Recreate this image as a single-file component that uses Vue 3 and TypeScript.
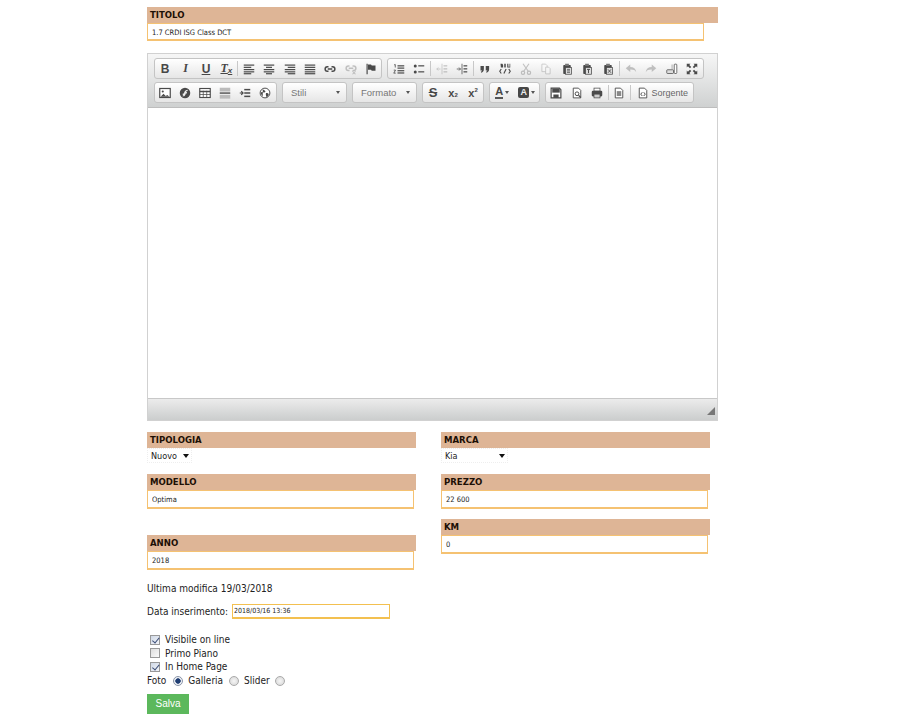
<script setup lang="ts">
type Tool = { svg?: string; text?: string; cls?: string; off?: boolean; sep?: boolean };
const d = '#4a4a4a';
const lines = (ys: [number, number, number][]) =>
  ys.map(([y, a, b]) => `<rect x="${a}" y="${y}" width="${b - a}" height="1.6" fill="${d}"/>`).join('');
const clip = (inner: string) =>
  `<rect x="3" y="2.5" width="10" height="12" rx="1" fill="${d}"/><rect x="5.5" y="1" width="5" height="3" fill="#777"/><rect x="6" y="6" width="8" height="9" fill="#ddd" stroke="${d}"/>${inner}`;
const I: Record<string, string> = {
  left: lines([[2, 1, 15], [5, 1, 11], [8, 1, 15], [11, 1, 15], [13.5, 1, 11]]),
  center: lines([[2, 1, 15], [5, 4, 12], [8, 1, 15], [11, 1, 15], [13.5, 4, 12]]),
  right: lines([[2, 1, 15], [5, 5, 15], [8, 1, 15], [11, 1, 15], [13.5, 5, 15]]),
  justify: lines([[2, 1, 15], [5, 1, 15], [8, 1, 15], [11, 1, 15], [13.5, 1, 15]]),
  link: `<path d="M6 5H4.5a3 3 0 0 0 0 6H6M10 5h1.5a3 3 0 0 1 0 6H10M5 8h6" fill="none" stroke="${d}" stroke-width="2"/>`,
  unlink: `<path d="M6 4H4.5a3 3 0 0 0 0 6H6M10 4h1.5a3 3 0 0 1 0 6H10M5 7h6" fill="none" stroke="${d}" stroke-width="2"/><path d="M10 11l4 4m0-4l-4 4" stroke="${d}" stroke-width="1.4"/>`,
  flag: `<path d="M2 1h1.6v14H2zM4 2h4l1 1.2h5v7H9l-1-1.2H4z" fill="${d}"/>`,
  ol: `<path d="M1.5 2.5L3 2v4M1 9.5h2.4L1 13.5h2.6" fill="none" stroke="${d}" stroke-width="1.1"/>` + lines([[3, 6, 15], [6, 6, 15], [9.5, 6, 15], [12.5, 6, 15]]),
  ul: `<circle cx="3" cy="4" r="2" fill="${d}"/><circle cx="3" cy="12" r="2" fill="${d}"/>` + lines([[3, 7, 15], [11, 7, 15]]),
  outdent: `<path d="M8 1v14" stroke="${d}"/><path d="M1 8h5M3 6l-2 2 2 2" fill="none" stroke="${d}"/>` + lines([[3, 10, 15], [7, 10, 15], [11, 10, 15]]),
  indent: `<path d="M8 1v14" stroke="${d}"/><path d="M1 8h5M4 6l2 2-2 2" fill="none" stroke="${d}"/>` + lines([[3, 10, 15], [7, 10, 15], [11, 10, 15]]),
  quote: `<path d="M2 4h4.5v4.4C6.5 11 5 12.5 3 13l-.6-1.2c1-.4 1.6-1 1.7-1.9H2zM9 4h4.5v4.4c0 2.6-1.5 4.1-3.5 4.6l-.6-1.2c1-.4 1.6-1 1.7-1.9H9z" fill="${d}"/>`,
  div: `<path d="M2 1h2.5l1 1.5V6h-3zM7 1h2v5H7zM11 1h1.5v4H14V1h1v5h-4z" fill="${d}"/><path d="M3 8l-2 3 2 3M13 8l2 3-2 3M9.5 8l-3 6" fill="none" stroke="${d}" stroke-width="1.5"/>`,
  cut: `<path d="M4 1l7 10M12 1L5 11" stroke="${d}" stroke-width="1.5"/><circle cx="4" cy="13" r="2.2" fill="none" stroke="${d}" stroke-width="1.5"/><circle cx="12" cy="13" r="2.2" fill="none" stroke="${d}" stroke-width="1.5"/>`,
  copy: `<path d="M2.5 1.5h5l2 2v8h-7z" fill="#fff" stroke="${d}"/><path d="M7.5 5.5h4l2 2v7h-6z" fill="#fff" stroke="${d}"/>`,
  paste: clip(`<path d="M8 8.5h4M8 10.5h4M8 12.5h4" stroke="${d}"/>`),
  pasteT: clip(`<path d="M8 8.5h4M10 8.5v5" stroke="${d}" stroke-width="1.3"/>`),
  pasteW: clip(`<path d="M8 8.5l4 4.5m0-4.5L8 13" stroke="${d}" stroke-width="1.2"/>`),
  undo: `<path d="M1 7l6-5v3.2c4.5 0 7.5 2.5 8 7-1.6-2.6-4-3.6-8-3.4V12z" fill="${d}"/>`,
  redo: `<path d="M15 7L9 2v3.2c-4.5 0-7.5 2.5-8 7 1.6-2.6 4-3.6 8-3.4V12z" fill="${d}"/>`,
  wiki: `<rect x="1" y="9" width="9" height="5" rx="1" fill="#ddd" stroke="${d}"/><rect x="11" y="1.5" width="3.4" height="12.5" rx="1" fill="#fff" stroke="${d}"/><rect x="7" y="2" width="3" height="6" fill="#ccc"/>`,
  max: `<path d="M1 1h5L4.4 2.6 7 5.2 5.2 7 2.6 4.4 1 6zM15 1v5l-1.6-1.6L10.8 7 9 5.2l2.6-2.6L10 1zM1 15v-5l1.6 1.6L5.2 9 7 10.8l-2.6 2.6L6 15zM15 15h-5l1.6-1.6L9 10.8 10.8 9l2.6 2.6L15 10z" fill="${d}"/>`,
  image: `<rect x="1" y="2" width="14" height="12" fill="#fff" stroke="${d}" stroke-width="1.6"/><path d="M2 13l4-4 3 3 2-1.5 3 2.5z" fill="${d}"/><circle cx="5" cy="6" r="1.4" fill="${d}"/>`,
  flash: `<circle cx="8" cy="8" r="7" fill="${d}"/><path d="M11.5 3.5C8 4 7 6 6.5 8.5H5v2h1c-.3 1-1 1.5-2 1.5 3 1 4.5-.5 5-3.5h1.5v-2H9.3c.3-.8 1-1.3 2.2-1.3z" fill="#eee"/>`,
  table: `<rect x="1" y="2" width="14" height="12" fill="#fff" stroke="${d}" stroke-width="1.5"/><path d="M1 6h14" stroke="${d}" stroke-width="2"/><path d="M1 10h14M5.7 5v9M10.3 5v9" stroke="${d}"/>`,
  hr: `<rect x="1" y="1" width="14" height="5" fill="#bbb"/><rect x="1" y="7.2" width="14" height="1.8" fill="${d}"/><rect x="1" y="10.5" width="14" height="5" fill="#bbb"/>`,
  block: `<path d="M1 8h4M3 5.5L5.5 8 3 10.5" fill="none" stroke="${d}" stroke-width="1.5"/><rect x="7" y="2.5" width="8" height="2" fill="${d}"/><rect x="7" y="7" width="8" height="2" fill="${d}"/><rect x="7" y="11.5" width="8" height="2" fill="${d}"/>`,
  globe: `<circle cx="8" cy="8" r="6.5" fill="#fff" stroke="${d}" stroke-width="1.3"/><path d="M5 2.5c1 1.5 3 1.5 3.5 3S6 7.5 5 7 2.5 7 2.5 8.5 4.5 11 5 12.5M9.5 8c1.5 0 3.5.5 3.5 2s-1.5 3-3 3.5c-.5-1.5-1.5-4.5-.5-5.5z" fill="${d}"/>`,
  save: `<path d="M1.5 1.5h11l2 2v11h-13z" fill="#fff" stroke="${d}" stroke-width="1.6"/><rect x="3" y="2" width="10" height="5.5" fill="${d}"/><rect x="4.5" y="10" width="7" height="4.5" fill="${d}"/>`,
  preview: `<path d="M3 1.5h7l3 3v10H3z" fill="#fff" stroke="${d}" stroke-width="1.2"/><circle cx="8" cy="9" r="2.5" fill="none" stroke="${d}" stroke-width="1.3"/><path d="M10 11l3 3" stroke="${d}" stroke-width="1.5"/>`,
  print: `<rect x="4" y="1.5" width="8" height="4" fill="#fff" stroke="${d}"/><rect x="1" y="5" width="14" height="7.5" rx="1.5" fill="${d}"/><rect x="4" y="9.5" width="8" height="5" fill="#ccc" stroke="${d}"/>`,
  page: `<path d="M3 1.5h7l3 3v10H3z" fill="#fff" stroke="${d}" stroke-width="1.2"/><rect x="5" y="5.5" width="6" height="6.5" fill="#888"/>`,
  source: `<path d="M3 1.5h7l3 3v10H3z" fill="#fff" stroke="${d}" stroke-width="1.2"/><path d="M7 7L5 9.5 7 12M9 7l2 2.5L9 12" fill="none" stroke="${d}" stroke-width="1.3"/>`,
};
const btn = (svg: string, off = false): Tool => ({ svg: I[svg], off });
const txt = (text: string, cls: string): Tool => ({ text, cls });
const sep: Tool = { sep: true };
const row1: Tool[][] = [
  [txt('B', 'b'), txt('I', 'i'), txt('U', 'u'), txt('T', 'tx'), sep, btn('left'), btn('center'), btn('right'), btn('justify'), btn('link'), btn('unlink', true), btn('flag')],
  [btn('ol'), btn('ul'), sep, btn('outdent', true), btn('indent'), sep, btn('quote'), btn('div'), btn('cut', true), btn('copy', true), btn('paste'), btn('pasteT'), btn('pasteW'), sep, btn('undo', true), btn('redo', true), btn('wiki'), btn('max')],
];
const group1: Tool[] = [btn('image'), btn('flash'), btn('table'), btn('hr'), btn('block'), btn('globe')];
const group3: Tool[] = [txt('S', 'strike'), txt('x', 'sub'), txt('x', 'sup')];
const group5: Tool[] = [btn('save'), btn('preview'), btn('print'), sep, btn('page'), sep];
const selects = [
  { label: 'TIPOLOGIA', value: 'Nuovo' },
  { label: 'MARCA', value: 'Kia' },
];
</script>

<template>
  <main class="page">
    <h2 class="head wide">TITOLO</h2>
    <input class="field title" value="1.7 CRDI ISG Class DCT" />

    <section class="editor">
      <div class="toolbar">
        <div class="tb-row">
          <div v-for="(g, gi) in row1" :key="gi" class="grp">
            <template v-for="(t, i) in g" :key="i">
              <span v-if="t.sep" class="sep"></span>
              <span v-else-if="t.text" class="tbtn" :class="t.cls">{{ t.text }}<small v-if="t.cls === 'tx'">x</small></span>
              <span v-else class="tbtn" :class="{ off: t.off }"><svg viewBox="0 0 16 16" width="12" height="12" v-html="t.svg"></svg></span>
            </template>
          </div>
        </div>
        <div class="tb-row">
          <div class="grp narrow first">
            <span v-for="(t, i) in group1" :key="i" class="tbtn"><svg viewBox="0 0 16 16" width="12" height="12" v-html="t.svg"></svg></span>
          </div>
          <div class="combo"><span>Stili</span><i class="caret"></i></div>
          <div class="combo"><span>Formato</span><i class="caret"></i></div>
          <div class="grp narrow">
            <span v-for="(t, i) in group3" :key="i" class="tbtn" :class="t.cls">{{ t.text }}<small v-if="t.cls === 'sub'">2</small><sup v-if="t.cls === 'sup'">2</sup></span>
          </div>
          <div class="grp">
            <span class="tbtn arrowed"><span class="colored">A</span><i class="caret"></i></span>
            <span class="tbtn arrowed"><span class="boxed">A</span><i class="caret"></i></span>
          </div>
          <div class="grp">
            <template v-for="(t, i) in group5" :key="i">
              <span v-if="t.sep" class="sep"></span>
              <span v-else class="tbtn"><svg viewBox="0 0 16 16" width="12" height="12" v-html="t.svg"></svg></span>
            </template>
            <span class="tbtn source"><svg viewBox="0 0 16 16" width="12" height="12" v-html="I.source"></svg><span>Sorgente</span></span>
          </div>
        </div>
      </div>
      <div class="content"></div>
      <div class="bottom"><i class="resize"></i></div>
    </section>

    <div class="cols">
      <div class="col">
        <h2 class="head">{{ selects[0].label }}</h2>
        <div class="sel nuovo"><span>{{ selects[0].value }}</span><i class="sel-arrow"></i></div>
        <h2 class="head gap-sel">MODELLO</h2>
        <input class="field" value="Optima" />
        <h2 class="head gap-anno">ANNO</h2>
        <input class="field" value="2018" />
      </div>
      <div class="col">
        <h2 class="head">{{ selects[1].label }}</h2>
        <div class="sel kia"><span>{{ selects[1].value }}</span><i class="sel-arrow"></i></div>
        <h2 class="head gap-sel">PREZZO</h2>
        <input class="field" value="22 600" />
        <h2 class="head gap-km">KM</h2>
        <input class="field" value="0" />
      </div>
    </div>

    <p class="modified">Ultima modifica 19/03/2018</p>
    <label class="date-row">Data inserimento: <input class="date" value="2018/03/16 13:36" /></label>

    <div class="checks">
      <label class="check"><input type="checkbox" checked />Visibile on line</label>
      <label class="check"><input type="checkbox" />Primo Piano</label>
      <label class="check"><input type="checkbox" checked />In Home Page</label>
    </div>
    <div class="foto">
      <span>Foto</span>
      <input type="radio" name="foto" checked />
      <span>Galleria</span>
      <input type="radio" name="foto" />
      <span>Slider</span>
      <input type="radio" name="foto2" />
    </div>
    <button class="save" type="button">Salva</button>
  </main>
</template>

<style>
html, body { margin: 0; background: #fff; }
</style>

<style scoped>
.page {
  width: 571px;
  height: 717px;
  margin-left: 147px;
  padding-top: 7px;
  font-family: "DejaVu Sans", Verdana, sans-serif;
  font-stretch: condensed;
  font-size: 10px;
  color: #222;
}
.head {
  margin: 0;
  height: 16px;
  padding-left: 3px;
  background: #deb596;
  color: #1c0f05;
  font-size: 9.5px;
  font-stretch: condensed;
  line-height: 16px;
  font-weight: 700;
}
.wide { width: 568px; }
.field {
  display: block;
  box-sizing: border-box;
  width: 267px;
  height: 19px;
  padding: 1px 4px 0;
  border: 1px solid #f5c272;
  border-bottom-width: 2px;
  background: #fff;
  font: 7.5px "DejaVu Sans", Verdana, sans-serif;
  font-stretch: condensed;
  color: #222;
  outline: none;
}
.title { width: 557px; height: 18px; }

.editor {
  margin-top: 12px;
  box-sizing: border-box;
  height: 368px;
  border: 1px solid #d1d1d1;
  display: flex;
  flex-direction: column;
}
.toolbar {
  height: 54px;
  box-sizing: border-box;
  padding: 4px 6px 0;
  background: linear-gradient(#f6f6f6, #cfd1d1);
  border-bottom: 1px solid #bdbdbd;
  display: flex;
  flex-direction: column;
  gap: 2px;
}
.tb-row { display: flex; gap: 5px; height: 22px; }
.grp {
  display: flex;
  align-items: center;
  box-sizing: border-box;
  height: 21px;
  border: 1px solid #c4c4c4;
  border-radius: 3px;
  background: linear-gradient(#ffffff, #e6e6e6);
}
.tbtn {
  width: 20.4px;
  flex: none;
  height: 19px;
  display: flex;
  align-items: center;
  justify-content: center;
  color: #474747;
  font: 700 11px "Liberation Sans", Arial, sans-serif;
}
.grp:nth-child(2) > .tbtn { width: 20.55px; }
.narrow .tbtn { width: 20px; }
.first { padding-right: 1px; }
.off { opacity: 0.3; }
.sep { width: 1px; height: 15px; margin: 0 0.5px; background: #c8c8c8; flex: none; }
.b { font: 700 12px "Liberation Sans", Arial, sans-serif; }
.i { font: italic 700 12px "Liberation Serif", serif; }
.u { text-decoration: underline; font-size: 12px; }
.tx { font: italic 700 12px "Liberation Serif", serif; text-decoration: underline; }
.tx small { font-size: 8px; align-self: flex-end; margin-bottom: 3px; font-family: "Liberation Sans", sans-serif; }
.strike { text-decoration: line-through; font-size: 13px; }
.sub small { font-size: 6px; align-self: flex-end; margin-bottom: 4px; }
.sup sup { font-size: 6px; margin-bottom: 6px; line-height: 1; }
.combo {
  box-sizing: border-box;
  width: 65px;
  height: 21px;
  padding: 0 6px 0 8px;
  display: flex;
  align-items: center;
  justify-content: space-between;
  border: 1px solid #c4c4c4;
  border-radius: 3px;
  background: linear-gradient(#ffffff, #e6e6e6);
  color: #777;
  font: 9.5px "Liberation Sans", Arial, sans-serif;
}
.caret {
  width: 0; height: 0;
  border: 2px solid transparent;
  border-top: 3px solid #555;
  border-bottom: 0;
  flex: none;
}
.tbtn.arrowed { width: 24.5px; gap: 2px; }
.colored {
  font-size: 11px;
  line-height: 11px;
  border-bottom: 2px solid #555;
}
.boxed {
  width: 11px; height: 11px;
  background: #474747;
  color: #eee;
  border-radius: 2px;
  font-size: 9px;
  line-height: 11px;
  text-align: center;
}
.tbtn.source {
  box-sizing: border-box;
  width: 61px;
  gap: 3px;
  justify-content: flex-start;
  padding-left: 5px;
  color: #666;
  font: 9px "Liberation Sans", Arial, sans-serif;
}
.content { flex: 1; background: #fff; border-bottom: 1px solid #c8c8c8; }
.bottom {
  box-sizing: border-box;
  height: 21px;
  background: linear-gradient(#ececec, #cbcdcd);
  display: flex;
  justify-content: flex-end;
  align-items: flex-end;
  padding: 0 2px 5px 0;
}
.resize {
  width: 8px; height: 8px;
  background: #777;
  clip-path: polygon(100% 0, 100% 100%, 0 100%);
}

.cols {
  margin-top: 11px;
  display: grid;
  grid-template-columns: 269px 269px;
  column-gap: 25px;
  height: 138px;
}
.sel {
  box-sizing: border-box;
  height: 15px;
  padding-left: 3px;
  display: flex;
  align-items: center;
  justify-content: space-between;
  border: 1px dotted #eee;
  background: #fff;
  font-size: 9px;
  color: #222;
}
.nuovo { width: 45px; }
.kia { width: 67px; }
.sel-arrow {
  width: 0; height: 0;
  margin-right: 2px;
  border: 3.5px solid transparent;
  border-top: 4px solid #111;
  border-bottom: 0;
}
.gap-sel { margin-top: 11px; }
.gap-anno { margin-top: 26px; }
.gap-km { margin-top: 10px; }

.modified { margin: 12px 0 0; height: 13px; line-height: 13px; }
.date-row { display: flex; align-items: center; gap: 4px; margin-top: 9px; height: 15px; }
.date {
  box-sizing: border-box;
  width: 158px;
  height: 15px;
  padding: 0 1px;
  border: 1px solid #f3c050;
  border-width: 1px 1px 2px;
  font: 7px "DejaVu Sans", Verdana, sans-serif;
  font-stretch: condensed;
  color: #222;
  outline: none;
}
.checks { margin-top: 14px; display: flex; flex-direction: column; }
.check { display: flex; align-items: center; height: 13.5px; padding-left: 3px; gap: 5px; }
input[type="checkbox"] {
  appearance: none;
  box-sizing: border-box;
  width: 10px; height: 10px;
  margin: 0;
  border: 1px solid #999;
  background: linear-gradient(135deg, #ddd, #fafafa);
  position: relative;
}
input[type="checkbox"]:checked { background: linear-gradient(135deg, #cfd8e6, #f2f4f8); }
input[type="checkbox"]:checked::after {
  content: "";
  position: absolute;
  left: 2.5px; top: 0;
  width: 2.5px; height: 5.5px;
  border: solid #3d4f78;
  border-width: 0 1.5px 1.5px 0;
  transform: rotate(40deg);
}
.foto { display: flex; align-items: center; height: 14px; gap: 5px; }
.foto span:nth-child(1) { margin-right: 2px; }
.foto span:nth-child(3) { margin-right: 1px; }
input[type="radio"] {
  appearance: none;
  box-sizing: border-box;
  width: 10px; height: 10px;
  margin: 0;
  border: 1px solid #aaa;
  border-radius: 50%;
  background: radial-gradient(circle, #f6f6f6, #d4d4d4);
}
input[type="radio"]:checked {
  background: radial-gradient(circle, #1f3d72 0 2.4px, #eef1f6 3px);
  border-color: #8a94a8;
}
.save {
  display: block;
  margin-top: 6px;
  box-sizing: border-box;
  width: 42px;
  height: 20px;
  padding: 0;
  border: 0;
  background: #5cb85c;
  color: #fff;
  font: 10px "Liberation Sans", Arial, sans-serif;
}
</style>
